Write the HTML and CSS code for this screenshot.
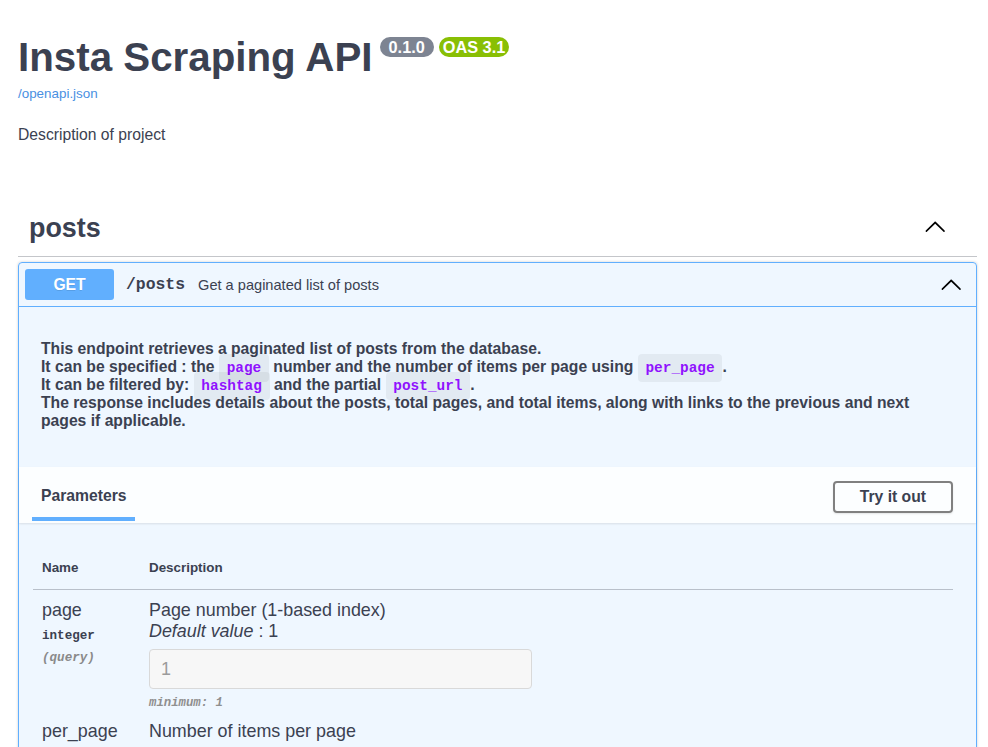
FILE: index.html
```html
<!DOCTYPE html>
<html lang="en">
<head>
<meta charset="utf-8">
<title>Insta Scraping API</title>
<link rel="stylesheet" href="styles.css">
</head>
<body>
<div class="wrapper">
  <section class="info">
    <div class="title-row">
      <h2 class="title">Insta Scraping API</h2>
      <span class="badge badge-version">0.1.0</span>
      <span class="badge badge-oas">OAS 3.1</span>
    </div>
    <a class="spec-link" href="#">/openapi.json</a>
    <p class="info-desc">Description of project</p>
  </section>

  <section class="tag-section">
    <h3 class="tag-header">
      <span>posts</span>
      <svg class="chev chev-tag" viewBox="0 0 20 20"><path d="M17.418 14.908c.272.268.709.268.979 0s.271-.701 0-.969l-7.908-7.830c-.27-.268-.707-.268-.979 0l-7.908 7.830c-.27.268-.27.701 0 .969.271.268.709.268.979 0L10 7.767l7.418 7.141z"/></svg>
    </h3>

    <div class="opblock">
      <div class="summary">
        <span class="method">GET</span>
        <span class="path">/posts</span>
        <span class="summary-desc">Get a paginated list of posts</span>
        <svg class="chev chev-op" viewBox="0 0 20 20"><path d="M17.418 14.908c.272.268.709.268.979 0s.271-.701 0-.969l-7.908-7.830c-.27-.268-.707-.268-.979 0l-7.908 7.830c-.27.268-.27.701 0 .969.271.268.709.268.979 0L10 7.767l7.418 7.141z"/></svg>
      </div>

      <div class="op-desc">
        <p>This endpoint retrieves a paginated list of posts from the database.<br>It can be specified : the <code class="code">page</code> number and the number of items per page using <code class="code">per_page</code>.<br>It can be filtered by: <code class="code">hashtag</code> and the partial <code class="code">post_url</code>.<br>The response includes details about the posts, total pages, and total items, along with links to the previous and next pages if applicable.</p>
      </div>

      <div class="section-header">
        <div class="tab">
          <h4 class="tab-title">Parameters</h4>
          <div class="tab-bar"></div>
        </div>
        <button class="btn" type="button">Try it out</button>
      </div>

      <div class="params">
        <div class="params-head">
          <span class="head-name">Name</span>
          <span>Description</span>
        </div>

        <div class="param-row">
          <div class="param-name-col">
            <div class="param-name">page</div>
            <div class="param-type">integer</div>
            <div class="param-in">(query)</div>
          </div>
          <div class="param-desc">
            <p class="desc-line">Page number (1-based index)</p>
            <p class="desc-line"><i>Default value</i> : 1</p>
            <input class="param-input" type="text" value="1" disabled>
            <div class="param-ext">minimum: 1</div>
          </div>
        </div>

        <div class="param-row param-row-last">
          <div class="param-name-col">
            <div class="param-name">per_page</div>
          </div>
          <div class="param-desc">
            <p class="desc-line">Number of items per page</p>
          </div>
        </div>
      </div>
    </div>
  </section>
</div>
</body>
</html>
```

FILE: styles.css
```css
* {
  box-sizing: border-box;
}

body {
  margin: 0;
  font-family: "Liberation Sans", Arial, sans-serif;
  color: #3b4151;
  background: #fff;
}

.wrapper {
  padding: 0 11px 0 18px;
}

/* ---------- info ---------- */
.info {
  padding-top: 35px;
}

.title-row {
  display: flex;
  align-items: flex-start;
}

.title {
  margin: 0;
  font-size: 40.3px;
  line-height: 46px;
  font-weight: 700;
  color: #3b4151;
}

.badge {
  margin-top: 1.5px;
  height: 20px;
  line-height: 20px;
  border-radius: 57px;
  color: #fff;
  font-size: 16.3px;
  font-weight: 700;
}

.badge-version {
  margin-left: 7px;
  padding: 0 9px;
  background: #7d8492;
}

.badge-oas {
  margin-left: 5px;
  padding: 0 4px;
  background: #89bf04;
}

.spec-link {
  display: block;
  margin-top: 5px;
  font-size: 13.4px;
  line-height: 16px;
  color: #4990e2;
  text-decoration: none;
}

.info-desc {
  margin: 24px 0 0;
  font-size: 15.7px;
  line-height: 18px;
}

/* ---------- tag ---------- */
.tag-section {
  margin-top: 55px;
}

.tag-header {
  display: flex;
  align-items: flex-start;
  justify-content: space-between;
  margin: 0 0 5px;
  padding: 14px 22px 12px 11px;
  border-bottom: 1px solid rgba(59, 65, 81, 0.3);
  font-size: 26.9px;
  line-height: 31px;
  font-weight: 700;
}

.chev {
  width: 22.4px;
  height: 22.4px;
  flex: none;
  fill: #000;
}

.chev-tag {
  margin: 1.5px 8.5px 0 0;
}

.chev-op {
  margin-right: 7.5px;
}

/* ---------- opblock ---------- */
.opblock {
  border: 1px solid #61affe;
  border-radius: 4px;
  background: rgba(97, 175, 254, 0.1);
  box-shadow: 0 0 3px rgba(0, 0, 0, 0.19);
}

.summary {
  display: flex;
  align-items: center;
  padding: 6px;
  border-bottom: 1px solid #61affe;
}

.method {
  min-width: 89px;
  padding: 7px 0;
  line-height: 17px;
  font-size: 15.7px;
  font-weight: 700;
  text-align: center;
  color: #fff;
  background: #61affe;
  border-radius: 3px;
  text-shadow: 0 1px 0 rgba(0, 0, 0, 0.1);
}

.path {
  padding: 0 13px 0 12px;
  font-family: "Liberation Mono", monospace;
  font-size: 16.4px;
  font-weight: 700;
  color: #3b4151;
}

.summary-desc {
  flex: 1;
  font-size: 14.6px;
  color: #3b4151;
}

.op-desc {
  padding: 33px 22px 37px;
  font-size: 15.7px;
  font-weight: 700;
  line-height: 18px;
}

.op-desc p {
  margin: 0;
}

.code {
  padding: 5.6px 7.8px;
  border-radius: 4px;
  background: rgba(0, 0, 0, 0.05);
  color: #9012fe;
  font-family: "Liberation Mono", monospace;
  font-size: 14.4px;
  font-weight: 700;
  line-height: 1;
}

/* ---------- section header ---------- */
.section-header {
  display: flex;
  justify-content: space-between;
  align-items: flex-start;
  height: 56px;
  padding: 0 23px 0 22px;
  background: rgba(255, 255, 255, 0.8);
  box-shadow: 0 1px 2px rgba(0, 0, 0, 0.1);
}

.tab {
  display: flex;
  flex-direction: column;
  margin-top: 20px;
}

.tab-title {
  margin: 0;
  font-size: 15.7px;
  line-height: 18px;
  font-weight: 700;
}

.tab-bar {
  height: 4px;
  margin: 12px -10% 0;
  background: #61affe;
}

.btn {
  margin-top: 14px;
  height: 32px;
  padding: 0 25px;
  border: 2px solid gray;
  border-radius: 4px;
  background: transparent;
  box-shadow: 0 1px 2px rgba(0, 0, 0, 0.1);
  font-family: inherit;
  font-size: 15.7px;
  font-weight: 700;
  color: #3b4151;
}

/* ---------- parameters ---------- */
.params {
  padding: 25px 23px 40px 14px;
}

.params-head {
  display: grid;
  grid-template-columns: 116px 1fr;
  padding: 12px 0 13px;
  border-bottom: 1px solid rgba(59, 65, 81, 0.3);
  font-size: 13.4px;
  line-height: 16px;
  font-weight: 700;
}

.head-name {
  padding-left: 9px;
}

.param-row {
  display: grid;
  grid-template-columns: 116px 1fr;
  padding: 10px 0 0;
}

.param-name-col {
  padding-left: 9px;
}

.param-name {
  font-size: 17.9px;
  line-height: 20px;
}

.param-type {
  padding: 9px 0 5px;
  font-family: "Liberation Mono", monospace;
  font-size: 12.6px;
  line-height: 15px;
  font-weight: 700;
}

.param-in {
  margin-top: 2px;
  font-family: "Liberation Mono", monospace;
  font-size: 12.6px;
  line-height: 15px;
  font-style: italic;
  font-weight: 700;
  color: #8a8a8a;
}

.desc-line {
  margin: 0 0 1px;
  font-size: 17.9px;
  line-height: 20px;
}

.param-input {
  display: block;
  width: 383px;
  height: 40px;
  margin-top: 8px;
  padding: 0 11px;
  border: 1px solid #d9d9d9;
  border-radius: 4px;
  background: #f7f7f7;
  font-family: inherit;
  font-size: 17.9px;
  color: #9b9b9b;
}

.param-ext {
  margin-top: 7px;
  font-family: "Liberation Mono", monospace;
  font-size: 12.3px;
  line-height: 15px;
  font-style: italic;
  font-weight: 700;
  color: #8f8f8f;
}
```
